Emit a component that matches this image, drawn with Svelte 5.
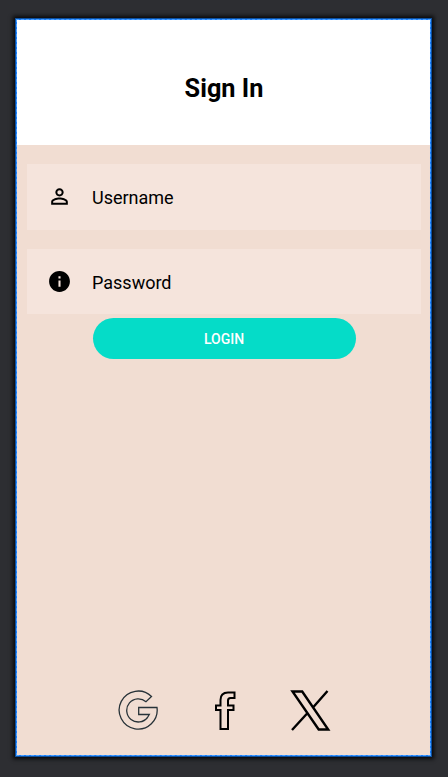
<script>
  const fields = [
    { label: 'Username', icon: 'person' },
    { label: 'Password', icon: 'info' }
  ];
</script>

<main class="canvas">
  <section class="device">
    <header><h1>Sign In</h1></header>
    <div class="body">
      {#each fields as field}
        <div class="field">
          <svg class="icon" viewBox="0 0 24 24" aria-hidden="true">
            {#if field.icon === 'person'}
              <path d="M12 5.900a2.100 2.100 0 1 1 0 4.200 2.100 2.100 0 0 1 0-4.200m0 9c2.970 0 6.100 1.460 6.100 2.100v1.100H5.900V17c0-.64 3.130-2.100 6.100-2.100M12 4C9.790 4 8 5.790 8 8s1.790 4 4 4 4-1.790 4-4-1.790-4-4-4zm0 9c-2.670 0-8 1.340-8 4v3h16v-3c0-2.660-5.330-4-8-4z" />
            {:else}
              <path d="M12 2C6.480 2 2 6.480 2 12s4.480 10 10 10 10-4.480 10-10S17.520 2 12 2zm1 15h-2v-6h2v6zm0-8h-2V7h2v2z" />
            {/if}
          </svg>
          <span>{field.label}</span>
        </div>
      {/each}
      <button>LOGIN</button>
      <footer>
        <svg class="google" width="42" height="44" viewBox="0 0 42 44" aria-label="Google">
          <path d="M34.500 8.500A19 19 0 1 0 40 19.500H21.700V26.500H32.300L30.500 29.500A11.600 11.600 0 1 1 29 13.700Z" />
        </svg>
        <svg class="facebook" width="24" height="44" viewBox="0 0 24 44" aria-label="Facebook">
          <path d="M21.500 4.500V10H17.500Q15 10 15 12.500V17.500H20.500V22H15V41H7.500V22H3V17.500H7.500V12Q7.500 4.500 15 4.500Z" />
        </svg>
        <svg class="x" width="42" height="44" viewBox="0 0 42 44" aria-label="X">
          <path d="M3.500 3.500H13.200L39.200 41.500H29.700ZM38.500 3L24.200 19.300M3 42L19 24.500" />
        </svg>
      </footer>
    </div>
  </section>
</main>

<style>
  .canvas {
    box-sizing: border-box;
    width: 448px;
    height: 777px;
    padding: 18px 16px 20px 15px;
    background: #2d2e32;
    font-family: Roboto, sans-serif;
    color: #000;
    overflow: hidden;
  }
  .device {
    box-sizing: border-box;
    width: 417px;
    height: 739px;
    display: flex;
    flex-direction: column;
    border: 1px solid #0c4f9e;
    outline: 1px dashed #4aa0ff;
    outline-offset: -2px;
    background: #f1ddd2;
    box-shadow: 0 0 4px 2px #08090b;
  }
  header {
    height: 126px;
    display: flex;
    align-items: center;
    justify-content: center;
    background: #fff;
    box-shadow: inset 1px 1px #167dff, inset -1px 0 #167dff;
  }
  h1 {
    margin: 14px 0 0 1px;
    font-size: 25.300px;
    line-height: 30px;
    font-weight: 700;
  }
  .body {
    flex: 1;
    display: flex;
    flex-direction: column;
    padding: 19px 10px 0 11px;
    box-shadow: inset 1px 0 #167dff, inset -1px -1px #167dff;
  }
  .field {
    box-sizing: border-box;
    height: 66px;
    margin-bottom: 19px;
    padding-left: 19.500px;
    display: flex;
    align-items: center;
    gap: 20.500px;
    background: #f5e4dc;
    font-size: 18px;
  }
  .field:nth-child(2) {
    height: 65px;
    margin-bottom: 4px;
  }
  .field span {
    padding-top: 1px;
  }
  .icon {
    width: 25px;
    height: 25px;
    margin-top: -1px;
  }
  button {
    width: 263px;
    height: 41px;
    margin-left: 65.500px;
    padding: 1px 0 0;
    border: 0;
    border-radius: 21px;
    background: #05dcc8;
    color: #fff;
    font: 500 14px Roboto, sans-serif;
  }
  footer {
    display: flex;
    margin: auto 0 24px 90px;
  }
  footer svg {
    fill: none;
    stroke: #000;
    stroke-width: 2;
  }
  footer .google {
    stroke: #273238;
    stroke-width: 1.300;
  }
  .facebook {
    margin-left: 54px;
  }
  footer .x {
    margin-left: 52px;
    stroke-width: 2.400;
  }
</style>
